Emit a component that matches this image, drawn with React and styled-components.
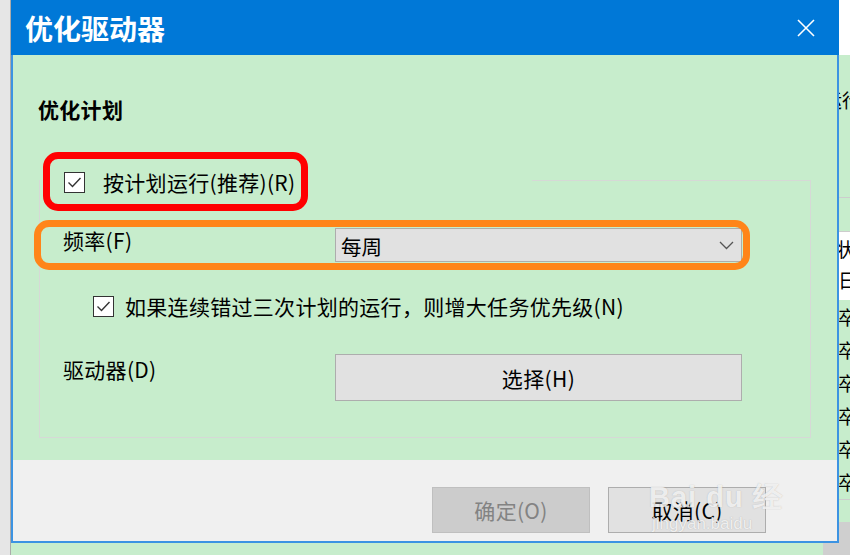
import React from "react";
import styled, { createGlobalStyle } from "styled-components";

const Global = createGlobalStyle`
  html, body { margin: 0; padding: 0; }
  body {
    width: 850px;
    height: 555px;
    overflow: hidden;
    background: #c7edcc;
    font-family: "Noto Sans CJK SC", "Microsoft YaHei", sans-serif;
    color: #000;
  }
  * { box-sizing: border-box; }
`;

const Screen = styled.div`
  display: grid;
  grid-template-columns: 11px 828px 11px;
  width: 850px;
  height: 555px;
`;

const LeftEdge = styled.div`
  background: #e6e6e6;
  border-right: 1px solid #ababab;
`;

const Middle = styled.div`
  display: flex;
  flex-direction: column;
`;

const Dialog = styled.div`
  position: relative;
  display: flex;
  flex-direction: column;
  height: 543px;
  border: 2px solid #3c93e2;
  border-top: 0;
`;

const TitleBar = styled.div`
  height: 55px;
  margin: 0 -2px;
  background: #0078d7;
  display: flex;
  align-items: center;
  justify-content: space-between;
  padding: 0 24px 0 14px;
  color: #fff;
`;

const Title = styled.div`
  font-size: 28px;
  font-weight: 700;
  line-height: 34px;
`;

const Content = styled.div`
  flex: 0 0 405px;
  background: #c7edcc;
  padding: 40px 26px 0 26px;
`;

const Heading = styled.div`
  font-size: 21px;
  font-weight: 700;
  line-height: 28px;
  letter-spacing: 0.3px;
  margin-left: -1px;
`;

const GroupBox = styled.fieldset`
  margin: 43px 0 0;
  padding: 0 0 36px 0;
  border: 1px solid #d6d9d6;
  min-width: 0;
`;

const Legend = styled.legend`
  width: 492px;
  height: 28px;
  padding: 5px 0 0 24px;
  margin: 0;
`;

const CheckRow = styled.label`
  display: flex;
  align-items: center;
  gap: ${(p) => p.$gap}px;
  height: 22px;
  padding-left: ${(p) => p.$indent || 0}px;
  margin-top: ${(p) => p.$top || 0}px;
  font-size: 21px;
  letter-spacing: 0.3px;
  line-height: 22px;
  white-space: nowrap;
`;

const Box = styled.span`
  flex: 0 0 21px;
  width: 21px;
  height: 21px;
  border: 1.5px solid #333;
  background: #fff;
  display: flex;
  align-items: center;
  justify-content: center;
`;

const Rows = styled.div`
  display: flex;
  flex-direction: column;
  padding: 34px 0 0 23px;
`;

const FieldRow = styled.div`
  display: grid;
  grid-template-columns: 272px 407px;
  align-items: start;
  margin-top: ${(p) => p.$top || 0}px;
`;

const FieldLabel = styled.div`
  font-size: 21px;
  letter-spacing: 0.3px;
  line-height: 28px;
  margin-top: ${(p) => p.$top}px;
`;

const Combo = styled.div`
  height: 34px;
  background: #e1e1e1;
  border: 1px solid #adadad;
  display: flex;
  align-items: center;
  justify-content: space-between;
  padding: 1px 7px 0 5px;
  font-size: 20.5px;
`;

const WideButton = styled.div`
  height: 47px;
  background: #e1e1e1;
  border: 1px solid #adadad;
  display: flex;
  align-items: center;
  justify-content: center;
  font-size: 21px;
  letter-spacing: 0.4px;
`;

const Footer = styled.div`
  flex: 1;
  background: #f0f0f0;
  display: flex;
  justify-content: flex-end;
  align-items: flex-start;
  gap: 18px;
  padding: 27px 71px 0 0;
`;

const DlgButton = styled.div`
  width: 158px;
  height: 46px;
  display: flex;
  align-items: center;
  justify-content: center;
  font-size: 21px;
  letter-spacing: 0.3px;
  background: ${(p) => (p.$disabled ? "#cccccc" : "#e1e1e1")};
  border: 1px solid ${(p) => (p.$disabled ? "#bfbfbf" : "#adadad")};
  color: ${(p) => (p.$disabled ? "#838383" : "#000")};
`;

const Highlight = styled.div`
  position: absolute;
  left: ${(p) => p.$x}px;
  top: ${(p) => p.$y}px;
  width: ${(p) => p.$w}px;
  height: ${(p) => p.$h}px;
  border: 7px solid ${(p) => p.$color};
  border-radius: 15px;
  pointer-events: none;
`;

const Watermark = styled.div`
  position: absolute;
  left: 636px;
  top: 482px;
  display: flex;
  flex-direction: column;
  color: rgba(255, 255, 255, 0.8);
  text-shadow: 0 0 1px rgba(120, 120, 120, 0.5);
  font-family: "Liberation Sans", Arial, sans-serif;
  pointer-events: none;
`;

const WmLogo = styled.div`
  font-size: 29px;
  font-weight: 700;
  line-height: 30px;
  letter-spacing: 1px;
`;

const WmUrl = styled.div`
  font-size: 17px;
  line-height: 20px;
  margin-left: 3px;
  margin-top: 2px;
`;

const BottomStrip = styled.div`
  flex: 1;
  display: flex;
`;

const StripGreen = styled.div`
  flex: 0 0 812px;
  background: #c7edcc;
`;

const StripGray = styled.div`
  flex: 1;
  background: #cfcfcf;
`;

const RightStrip = styled.div`
  display: flex;
  flex-direction: column;
  overflow: hidden;
  background: #c7edcc;
`;

const BgBlock = styled.div`
  flex: 0 0 ${(p) => p.$h}px;
  background: ${(p) => p.$bg};
  border-bottom: ${(p) => (p.$line ? "1px solid #cdcdcd" : "0")};
  padding-top: ${(p) => p.$pt || 0}px;
  overflow: hidden;
`;

const Frag = styled.div`
  font-size: 19px;
  line-height: ${(p) => p.$lh || 33}px;
  white-space: nowrap;
  margin-left: ${(p) => p.$ml || 0}px;
`;

const Check = () => (
  <Box>
    <svg width="15" height="13" viewBox="0 0 15 13">
      <path d="M1.5 6.5 L5.5 10.5 L13.5 2" fill="none" stroke="#333" strokeWidth="1.4" />
    </svg>
  </Box>
);

export default function App() {
  return (
    <>
      <Global />
      <Screen>
        <LeftEdge />
        <Middle>
          <Dialog>
            <TitleBar>
              <Title>优化驱动器</Title>
              <svg width="18" height="18" viewBox="0 0 18 18">
                <path d="M1 1 L17 17 M17 1 L1 17" stroke="#fff" strokeWidth="1.6" />
              </svg>
            </TitleBar>
            <Content>
              <Heading>优化计划</Heading>
              <GroupBox>
                <Legend>
                  <CheckRow $gap={18}>
                    <Check />
                    按计划运行(推荐)(R)
                  </CheckRow>
                </Legend>
                <Rows>
                  <FieldRow>
                    <FieldLabel $top={-2}>频率(F)</FieldLabel>
                    <Combo>
                      <span>每周</span>
                      <svg width="15" height="9" viewBox="0 0 15 9">
                        <path d="M1 1 L7.5 7.5 L14 1" fill="none" stroke="#555" strokeWidth="1.3" />
                      </svg>
                    </Combo>
                  </FieldRow>
                  <CheckRow $gap={11} $indent={30} $top={33}>
                    <Check />
                    如果连续错过三次计划的运行，则增大任务优先级(N)
                  </CheckRow>
                  <FieldRow $top={37}>
                    <FieldLabel $top={1}>驱动器(D)</FieldLabel>
                    <WideButton>选择(H)</WideButton>
                  </FieldRow>
                </Rows>
              </GroupBox>
            </Content>
            <Footer>
              <DlgButton $disabled>确定(O)</DlgButton>
              <DlgButton>取消(C)</DlgButton>
            </Footer>
            <Highlight $x={30} $y={152} $w={265} $h={59} $color="#ff0000" />
            <Highlight $x={21} $y={220} $w={716} $h={50} $color="#ff8519" />
            <Watermark>
              <WmLogo>Bai du 经</WmLogo>
              <WmUrl>jingyan.baidu</WmUrl>
            </Watermark>
          </Dialog>
          <BottomStrip>
            <StripGreen />
            <StripGray />
          </BottomStrip>
        </Middle>
        <RightStrip>
          <BgBlock $h={55} $bg="#ffffff" />
          <BgBlock $h={143} $bg="#c7edcc" $line $pt={28}>
            <Frag $ml={-16}>运行</Frag>
          </BgBlock>
          <BgBlock $h={34} $bg="#c7edcc" $line />
          <BgBlock $h={68} $bg="#ffffff">
            <Frag $ml={-3}>状</Frag>
            <Frag $ml={-1} $lh={30}>日</Frag>
          </BgBlock>
          <BgBlock $h={200} $bg="#c7edcc" $line>
            <Frag $ml={-1}>卒</Frag>
            <Frag $ml={-1}>卒</Frag>
            <Frag $ml={-1}>卒</Frag>
            <Frag $ml={-1}>卒</Frag>
            <Frag $ml={-1}>卒</Frag>
            <Frag $ml={-1}>卒</Frag>
          </BgBlock>
          <BgBlock $h={22} $bg="#c7edcc" />
          <BgBlock $h={33} $bg="#cfcfcf" />
        </RightStrip>
      </Screen>
    </>
  );
}
